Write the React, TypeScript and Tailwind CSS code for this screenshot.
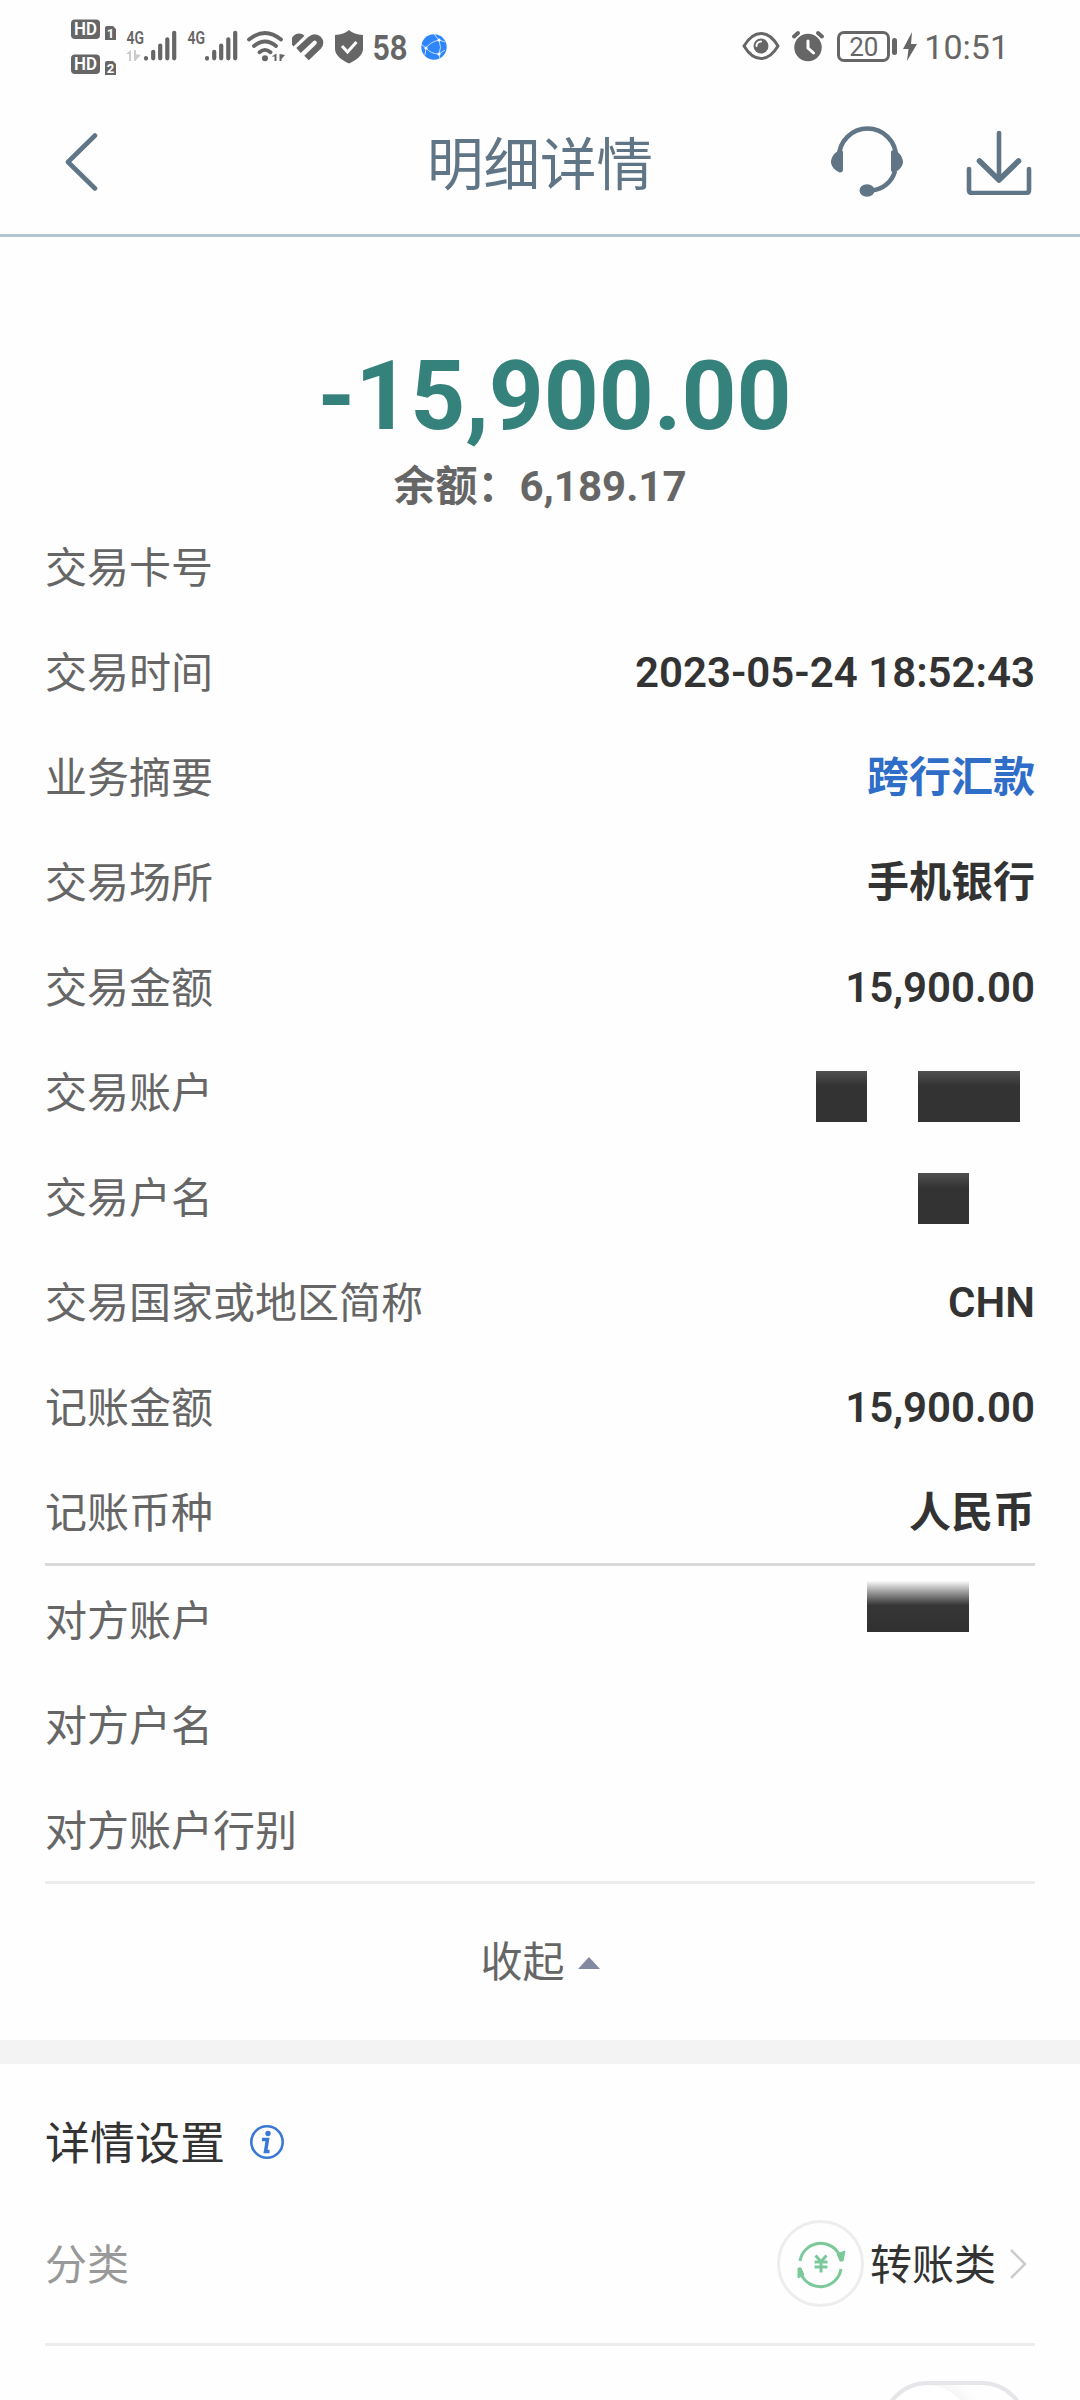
import type { ReactNode } from 'react';
import clsx from 'clsx';

type Row = { label: string; value?: ReactNode; link?: boolean };

const Mask = ({ className }: { className: string }) => (
  <span className={clsx('block h-[51px] bg-linear-to-b from-[#505050] via-[#333] via-30% to-[#333]', className)} />
);

const transactionRows: Row[] = [
  { label: '交易卡号' },
  { label: '交易时间', value: '2023-05-24 18:52:43' },
  { label: '业务摘要', value: '跨行汇款', link: true },
  { label: '交易场所', value: '手机银行' },
  { label: '交易金额', value: '15,900.00' },
  {
    label: '交易账户',
    value: (
      <span className="flex gap-[51px] pr-[15px] pt-[8px]">
        <Mask className="w-[51px]" />
        <Mask className="w-[102px]" />
      </span>
    ),
  },
  {
    label: '交易户名',
    value: (
      <span className="flex pr-[66px] pt-[2px]">
        <Mask className="w-[51px]" />
      </span>
    ),
  },
  { label: '交易国家或地区简称', value: 'CHN' },
  { label: '记账金额', value: '15,900.00' },
  { label: '记账币种', value: '人民币' },
];

const counterpartyRows: Row[] = [
  {
    label: '对方账户',
    value: (
      <span className="flex pr-[66px] pb-[28px]">
        <span className="block h-[51px] w-[102px] bg-linear-to-b from-[#fbfbfb] via-[#363636] via-48% to-[#303030]" />
      </span>
    ),
  },
  { label: '对方户名' },
  { label: '对方账户行别' },
];

const SimBadge = ({ n }: { n: number }) => (
  <svg className="block overflow-visible" width="46" height="21" viewBox="0 0 46 21">
    <rect x="1" y="0.5" width="29" height="19.5" rx="4" fill="#666" />
    <text x="15.5" y="16" textAnchor="middle" textLength="23" lengthAdjust="spacingAndGlyphs" fontSize="18" fontWeight="600" fill="#fff">HD</text>
    <path d="M37 7h6l3 3v11H35V9q0-2 2-2z" fill="#666" />
    <text x="40.4" y="19" textAnchor="middle" fontSize="13" fontWeight="700" fill="#fff">{n}</text>
  </svg>
);

const Signal = ({ arrows }: { arrows?: boolean }) => (
  <svg className="block overflow-visible" width="52" height="38" viewBox="0 -4 52 38" fill="#666">
    <text x="0.5" y="15" fontSize="19" fontWeight="600" textLength="17.5" lengthAdjust="spacingAndGlyphs">4G</text>
    {arrows && <path d="M5 21v11H3v-7H0zM8 21h2v11H8zM10 25l5 1-5 5z" fill="#ccc" />}
    <g stroke="#666" strokeWidth="4.2" strokeLinecap="round">
      <path d="M20 29.6v-.6M27.2 29.3v-6.5M34.2 29.3v-12.8M41.3 29.3V10.3M48.2 29.3V3.8" />
    </g>
  </svg>
);

const StatusBar = () => (
  <div className="flex h-[92px] items-start text-[#666]">
    <div className="ml-[70px] flex w-[56px] flex-col gap-[13.5px] pt-[19px]">
      <SimBadge n={1} />
      <SimBadge n={2} />
    </div>
    <div className="flex gap-[9px] pt-[25px]">
      <Signal arrows />
      <Signal />
    </div>
    {/* wifi */}
    <svg className="ml-[7px] mt-[29px]" width="40" height="34" viewBox="0 0 40 34" fill="none" stroke="#666" strokeWidth="3.8" strokeLinecap="round">
      <path d="M3 10.5Q19 -2.5 35 10.5M8 17Q19 8 30 17M13.5 23.2Q19 18.5 24.5 23.2" />
      <circle cx="19" cy="29.3" r="3" fill="#666" stroke="none" />
      <path d="M30.5 24.5v7.5h-2v-4.5h-3zM33.5 25v7h2v-2l3.5-4z" fill="#666" stroke="none" />
    </svg>
    {/* health */}
    <svg className="ml-[6px] mt-[33px]" width="32" height="28" viewBox="0 0 32 28" fill="none" stroke="#666" strokeWidth="6.5">
      <path d="M1.5 13.5A7 7 0 0 1 12.5 2.8z" fill="#666" stroke="none" />
      <path d="M6.5 17.5 19 6a5.2 5.2 0 0 1 7.5 7.5L14.5 25" />
    </svg>
    {/* guard */}
    <svg className="ml-[10px] mt-[30px]" width="30" height="34" viewBox="0 0 30 34" fill="none">
      <path d="M15 0C18 3 23 4.7 29 5v14c0 6-7 11.5-14 14.5C8 30.5 1 25 1 19V5C7 4.7 12 3 15 0z" fill="#666" />
      <path d="m8 16 5.5 6L22.5 12" stroke="#fff" strokeWidth="3" />
    </svg>
    <svg className="ml-[9px] mt-[29px] overflow-visible" width="36" height="36" viewBox="0 0 36 36" fill="#666">
      <text x="-0.5" y="31" fontSize="34" fontWeight="700" textLength="35" lengthAdjust="spacingAndGlyphs" className="font-['Inter']">58</text>
    </svg>
    {/* browser globe */}
    <svg className="ml-[12px] mt-[34px]" width="26" height="26" viewBox="0 0 26 26" fill="none" stroke="#e6f2ff">
      <circle cx="13" cy="13" r="12.7" fill="#2f86fa" stroke="none" />
      <path d="M5 14Q9 8 18 6Q21 14 18 20Q10 20 5 14M5 14 0 10M18 6 13 0M18 20l1 5M18 6l6 2M18 20l6-4M5 14 4 21" strokeWidth="0.8" />
      <g fill="#fff" stroke="none">
        <circle cx="5" cy="14" r="1.6" />
        <circle cx="18" cy="6" r="1.6" />
        <circle cx="18" cy="20" r="1.6" />
      </g>
    </svg>

    <div className="ml-auto mr-[71px] flex">
      <svg className="mt-[31px]" width="38" height="30" viewBox="0 0 38 30" fill="none">
        <path d="M2 15Q9.5 2.5 19 2.5T36 15Q28.5 27.5 19 27.5T2 15z" stroke="#666" strokeWidth="3" strokeLinejoin="round" />
        <circle cx="19" cy="15" r="7.5" fill="#666" />
        <path d="M14.5 15a4.5 4.5 0 0 1 4.5-4.5" stroke="#fff" strokeWidth="2" strokeLinecap="round" />
      </svg>
      <svg className="ml-[11px] mt-[30px]" width="34" height="32" viewBox="0 0 34 32" fill="none" strokeLinecap="round">
        <circle cx="17" cy="17.5" r="13.7" fill="#666" />
        <path d="M3 6.5 7 3M27 3l4 3.5" stroke="#666" strokeWidth="4" />
        <path d="M17 11v7l5.5 5" stroke="#fff" strokeWidth="3" />
      </svg>
      <div className="ml-[12px] mt-[31px] flex h-[31px] w-[53px] items-center justify-center rounded-[7px] border-3 border-[#666] text-[26px] leading-none">20</div>
      <div className="ml-[2px] mt-[38px] h-[17px] w-[5px] rounded-sm bg-[#666]" />
      <svg className="ml-[5px] mt-[32px]" width="16" height="30" viewBox="0 0 16 30" fill="#666">
        <path d="M10 0 1 17h5.5L5 29 15 12H9z" />
      </svg>
      <span className="ml-[6px] mt-[28px] text-[34px] leading-[38px]">10:51</span>
    </div>
  </div>
);

const NavBar = () => (
  <header className="flex h-[145px] items-center border-b-3 border-[#b1c6cf] pb-[4px] text-[#607585]">
    <svg className="ml-[62px]" width="38" height="60" viewBox="0 0 38 60" fill="none" stroke="currentColor" strokeWidth="4.6" strokeLinecap="round" strokeLinejoin="round">
      <path d="M33 4.5 6 31l27 26.5" />
    </svg>
    <h1 className="ml-[327px] pt-[9px] text-[56.5px] leading-[64px]">明细详情</h1>
    <svg className="ml-auto" width="74" height="74" viewBox="0 0 74 74" fill="none" stroke="currentColor" strokeWidth="4.6">
      <path d="M9 33a28.5 28.5 0 0 1 57 0M65 47C62 58 53 65.5 41 66.5" />
      <path d="M13 28v17.5q0 3-3 3C5 47 1 42 1 38s3-9 7-11q5-2 5 1zM61 28v17.5q0 3 3 3C69 47 73 42 73 38s-3-9-7-11q-5-2-5 1z" fill="currentColor" stroke="none" />
      <ellipse cx="37" cy="66.5" rx="7.5" ry="6.2" fill="currentColor" stroke="none" />
    </svg>
    <svg className="ml-[62px] mr-[47px]" width="67" height="67" viewBox="0 0 67 67" fill="none" stroke="currentColor" strokeWidth="4.6" strokeLinecap="round" strokeLinejoin="round">
      <path d="M33 5v47" />
      <path d="M13.5 33 33 52l19.5-19" strokeWidth="5.6" />
      <path d="M3 41v21q0 3 3 3h54q3 0 3-3V41" />
    </svg>
  </header>
);

const DetailRow = ({ label, value, link }: Row) => (
  <div className="flex h-[105px] items-center justify-between text-[42px]">
    <span className="text-[#666]">{label}</span>
    <span className={clsx('pb-[2px] font-semibold', link ? 'text-[#2e6dc8]' : 'text-[#333]')}>{value}</span>
  </div>
);

export default function App() {
  return (
    <div className="h-[2400px] w-[1080px] overflow-hidden bg-[#fefefe] font-['Roboto','Noto_Sans_CJK_SC',sans-serif]">
      <StatusBar />
      <NavBar />

      <main>
        <section className="px-[45px]">
          <div className="h-[279px] pt-[103px] text-center">
            <p className="pl-[29px] text-[96px] font-bold leading-[112px] tracking-[-0.1px] text-[#35827c]">-15,900.00</p>
            <p className="mt-[5px] text-[42px] font-bold leading-[60px] text-[#666]">余额：6,189.17</p>
          </div>

          <div className="h-[1050px] border-b-3 border-[#d9d9d9]">
            {transactionRows.map((row) => (
              <DetailRow key={row.label} {...row} />
            ))}
          </div>
          <div className="h-[318px] border-b-3 border-[#ededed] pt-[3px]">
            {counterpartyRows.map((row) => (
              <DetailRow key={row.label} {...row} />
            ))}
          </div>

          <button className="flex h-[156px] w-full items-center justify-center gap-[13px] pt-[1px] text-[42px] text-[#666]">
            收起
            <svg width="22" height="12" viewBox="0 0 22 12" fill="#8289a1">
              <path d="M11 0 22 12H0z" />
            </svg>
          </button>
        </section>

        <div className="h-[24px] bg-[#f3f3f3]" />

        {/* settings */}
        <section className="px-[45px]">
          <div className="flex h-[156px] items-center text-[45px] text-[#333]">
            <h2 className="pt-[5px]">详情设置</h2>
            <svg className="ml-[25px]" width="34" height="34" viewBox="0 0 34 34" fill="none" stroke="#3a78d6" strokeWidth="2.6">
              <circle cx="17" cy="17" r="15.7" />
              <circle cx="18" cy="8.5" r="2.7" fill="#3a78d6" stroke="none" />
              <path d="M12 14.5h5.5L15.5 26.5h4" strokeWidth="3.5" />
            </svg>
          </div>

          <div className="flex h-[126px] items-center border-b-3 border-[#ededed] pb-[36px] text-[42px]">
            <span className="pt-[4px] text-[#999]">分类</span>
            <svg className="ml-auto" width="87" height="87" viewBox="0 0 87 87" fill="none" stroke="#7bc99a">
              <circle cx="43.5" cy="43.5" r="42" stroke="#ededed" strokeWidth="3" />
              <path d="M23 41a21 21 0 0 1 40-5M64 49a21 21 0 0 1-40 5" strokeWidth="3" />
              <path d="M60 34l8-3-2 10h-3zM27 55l-6 3V48h3z" fill="#7bc99a" strokeWidth="1" />
              <path d="M38.5 35.5l5.5 6 5.5-6M44 41.500v11M37.500 42h13M37.500 47h13" strokeWidth="3" />
            </svg>
            <span className="ml-[6px] pt-[4px] text-[#333]">转账类</span>
            <svg className="ml-[14px] mr-[8px]" width="17" height="30" viewBox="0 0 17 30" fill="none" stroke="#ccc" strokeWidth="2.5">
              <path d="M1 1l14 14L1 29" />
            </svg>
          </div>

          <div className="flex justify-end pr-[7px] pt-[35px]">
            <div className="h-[93px] w-[147px] overflow-hidden rounded-full border-4 border-[#e5e5ea]">
              <div className="size-[85px] rounded-full bg-white shadow-[0_8px_24px_rgba(0,0,0,0.15)]" />
            </div>
          </div>
        </section>
      </main>
    </div>
  );
}
